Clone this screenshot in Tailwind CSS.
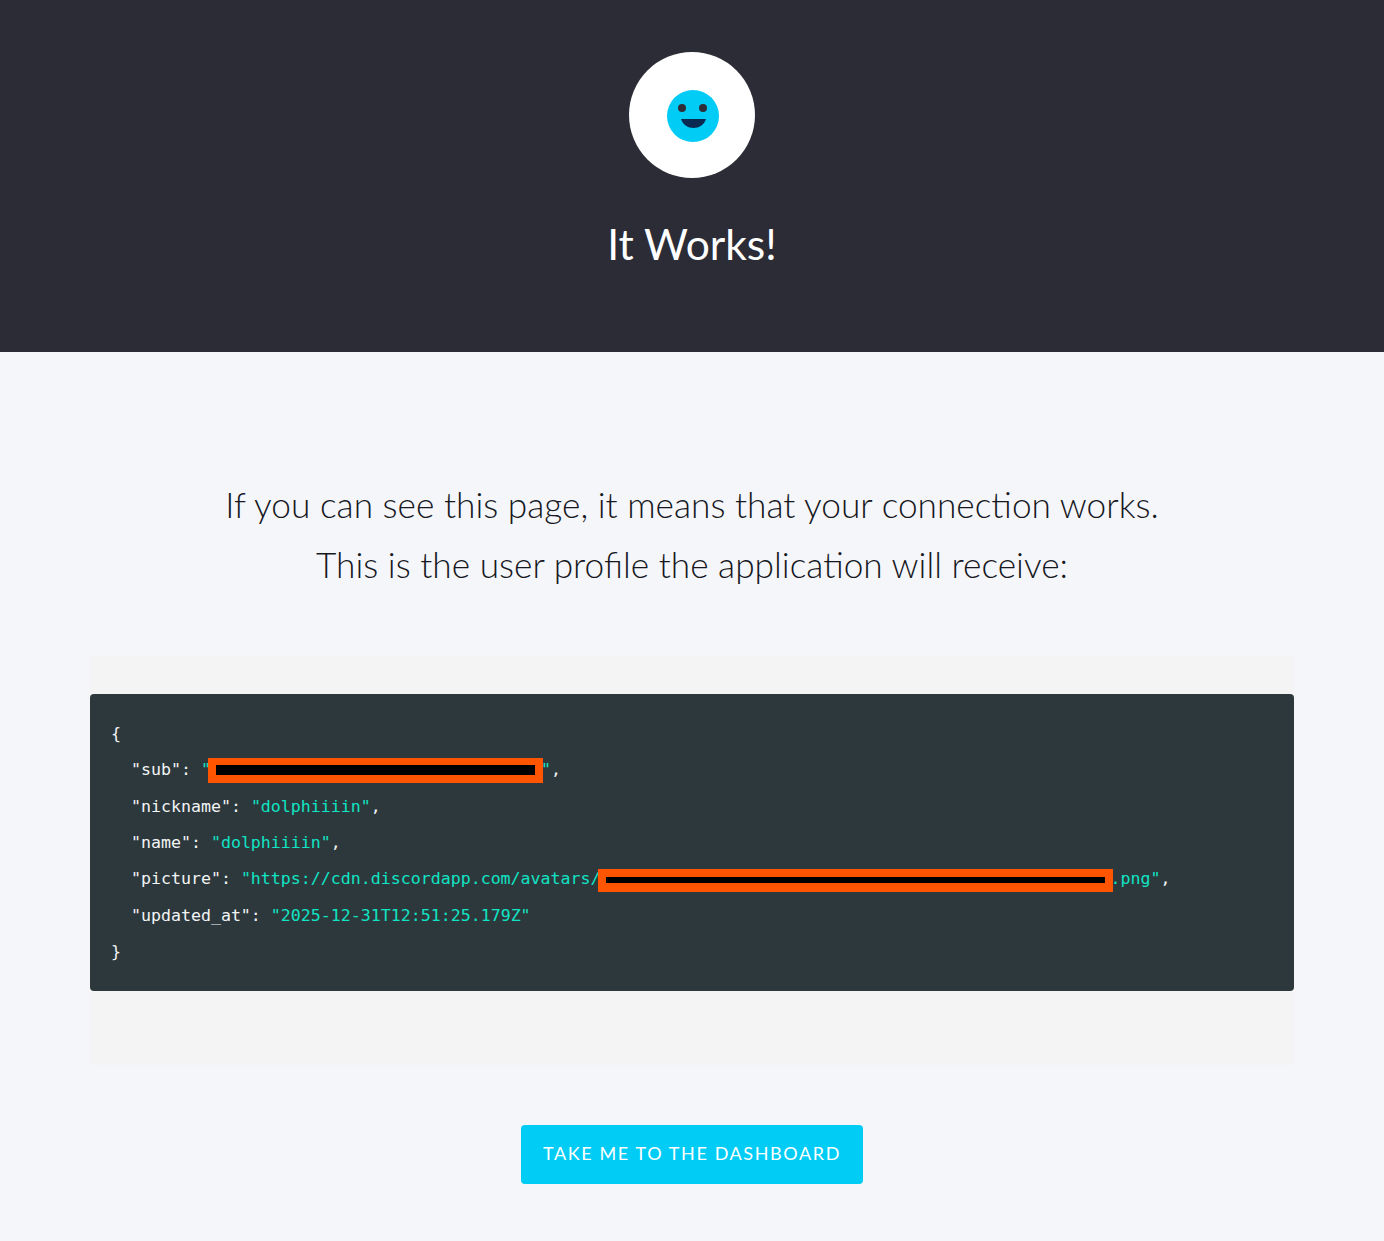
<!DOCTYPE html>
<html lang="en"><head><meta charset="utf-8"><title>It Works!</title>
<script src="https://cdn.jsdelivr.net/npm/@tailwindcss/browser@4"></script></head>
<body class="bg-[#f5f6fa] font-['Lato','Liberation_Sans',sans-serif]">
<header class="h-[352px] bg-[#2b2c36] flex flex-col items-center pt-[52px]">
  <div class="w-[126px] h-[126px] rounded-full bg-white flex items-center justify-center">
    <svg class="ml-[2px] mt-[2px]" width="52" height="52" viewBox="0 0 52 52">
      <circle cx="26" cy="26" r="26" fill="#00ccf5"/>
      <circle cx="15" cy="18" r="4" fill="#2d2e38"/>
      <circle cx="36" cy="18" r="4" fill="#2d2e38"/>
      <path d="M14 29H39C37 35 32 38 26.500 38C21 38 16 35 14 29Z" fill="#0b2a52"/>
    </svg>
  </div>
  <h1 class="mt-[40px] text-[42.5px] leading-[52px] font-normal text-white">It Works!</h1>
</header>
<main class="flex flex-col items-center">
  <div class="mt-[124px] text-center text-[35.25px] leading-[60px] font-light text-[#16181e] -translate-y-[1px]">
    <p>If you can see this page, it means that your connection works.</p>
    <p>This is the user profile the application will receive:</p>
  </div>
  <div class="mt-[60px] w-[1204px] h-[409px] bg-[#f4f4f4] pt-[38px]">
    <pre class="h-[297px] rounded-[4px] bg-[#2d383d] px-[21px] pt-[21.7px] font-['DejaVu_Sans_Mono',monospace] text-[16.6px] leading-[36.4px] text-[#f2f4f5]">{
  "sub": <span class="text-[#10e4c4]">"<span class="relative inline-block w-[330px] h-[20px] align-middle"><span class="absolute left-[-3px] top-[-3px] w-[335px] h-[25px] bg-[#ff5500] flex items-center justify-center"><span class="block w-[319px] h-[10px] bg-black"></span></span></span>"</span>,
  "nickname": <span class="text-[#10e4c4]">"dolphiiiin"</span>,
  "name": <span class="text-[#10e4c4]">"dolphiiiin"</span>,
  "picture": <span class="text-[#10e4c4]">"https://cdn.discordapp.com/avatars/<span class="relative inline-block w-[510px] h-[20px] align-middle"><span class="absolute left-[-3px] top-[-1px] w-[515px] h-[23px] bg-[#ff5500] flex items-center justify-center"><span class="block w-[499px] h-[6px] bg-black"></span></span></span>.png"</span>,
  "updated_at": <span class="text-[#10e4c4]">"2025-12-31T12:51:25.179Z"</span>
}</pre>
  </div>
  <a href="#" class="mt-[60px] mb-[57px] w-[342px] h-[59px] pb-[2px] rounded-[4px] bg-[#00ccf5] flex items-center justify-center text-white text-[18px] font-normal tracking-[1.6px] uppercase">Take me to the dashboard</a>
</main>
</body></html>
